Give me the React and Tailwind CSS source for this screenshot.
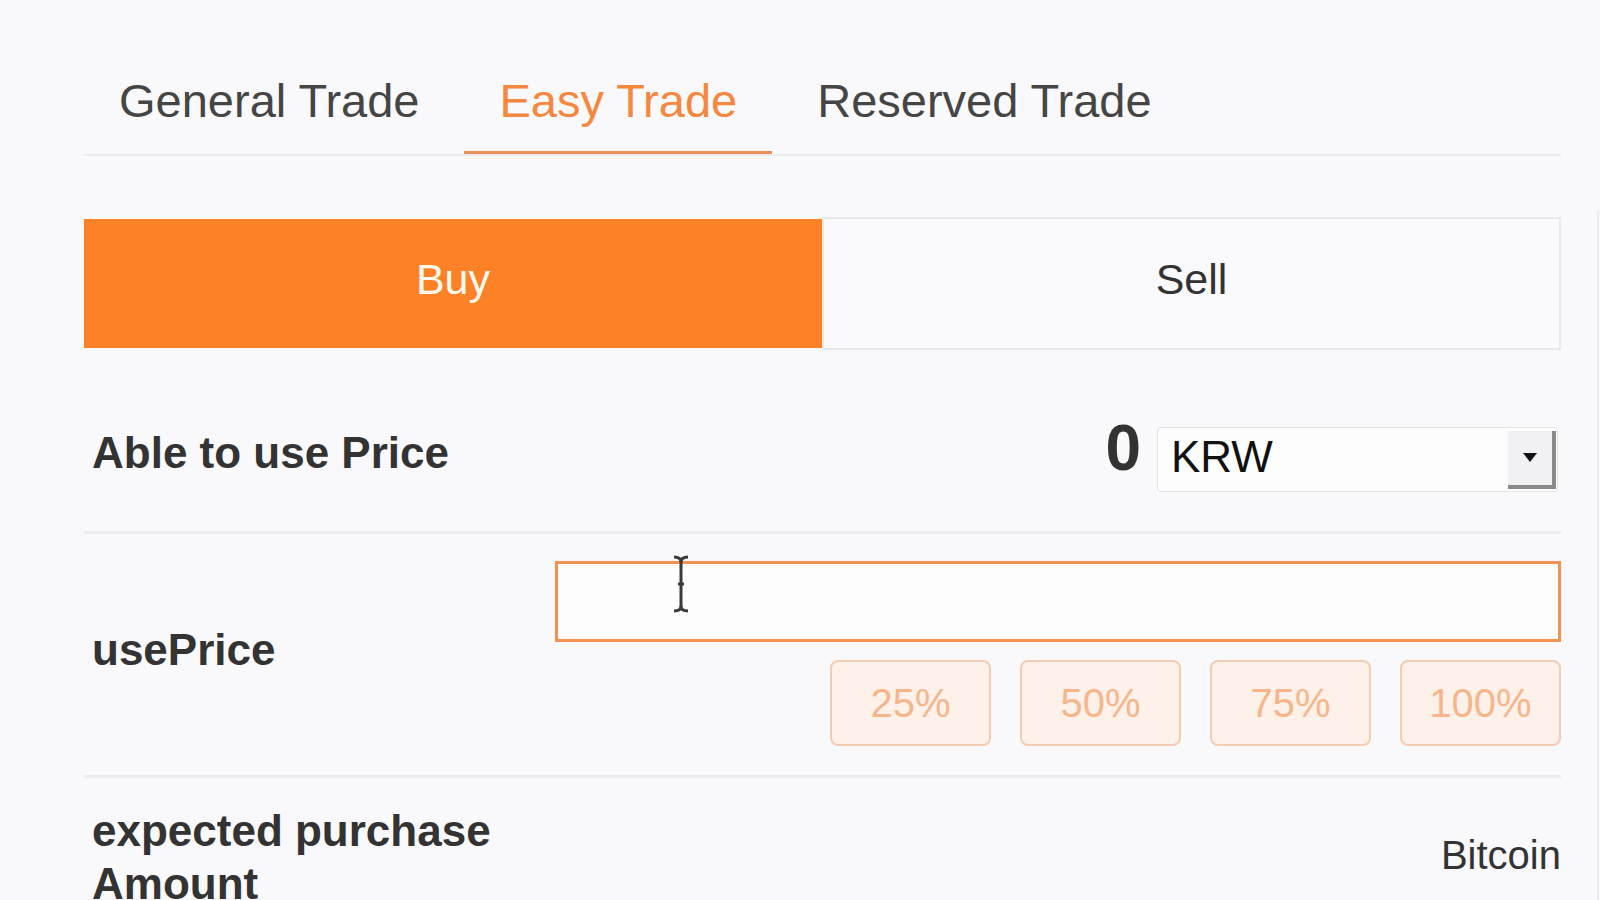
import { useState } from 'react';

const font = { fontFamily: '"Liberation Sans", Arial, sans-serif' };

function TextCursor() {
    // I-beam mouse cursor hovering over the price input
    return (
        <svg width="18" height="58" viewBox="0 0 18 58" className="absolute left-[117px] top-[-6px]">
            <path d="M2 2 Q9 2 9 7 Q9 2 16 2" fill="none" stroke="#3a3a3a" strokeWidth="3" />
            <line x1="9" y1="6" x2="9" y2="52" stroke="#3a3a3a" strokeWidth="3" />
            <line x1="6" y1="29" x2="12" y2="29" stroke="#3a3a3a" strokeWidth="3" />
            <path d="M2 56 Q9 56 9 51 Q9 56 16 56" fill="none" stroke="#3a3a3a" strokeWidth="3" />
        </svg>
    );
}

function App() {
    const [tab, setTab] = useState('easy');
    const [side, setSide] = useState('buy');
    const [price, setPrice] = useState('');

    const tabs = [
        { id: 'general', label: 'General Trade' },
        { id: 'easy', label: 'Easy Trade' },
        { id: 'reserved', label: 'Reserved Trade' },
    ];

    return (
        <div className="h-[900px] w-[1600px] overflow-hidden bg-[#f9f9fb] flex" style={font}>
            <div className="flex-1 pl-[84px] pr-[36px]">
                {/* tabs */}
                <div className="mt-[56px] flex gap-[10px] border-b-2 border-[#ececf0]">
                    {tabs.map((t) => (
                        <button
                            key={t.id}
                            onClick={() => setTab(t.id)}
                            className={
                                tab === t.id
                                    ? 'h-[98px] px-[35px] pb-[6px] border-b-[3px] border-[#e9905a] text-[47px] text-[#f5873f] leading-none'
                                    : 'h-[98px] px-[35px] pb-[6px] border-b-[3px] border-transparent text-[47px] text-[#454545] leading-none'
                            }
                        >
                            {t.label}
                        </button>
                    ))}
                </div>

                {/* buy / sell */}
                <div className="mt-[63px] flex h-[129px]">
                    <button
                        onClick={() => setSide('buy')}
                        className={
                            side === 'buy'
                                ? 'w-[738px] pb-[8px] bg-[#fd8227] text-[#fffaf0] text-[43px]'
                                : 'w-[738px] pb-[8px] bg-[#fafafc] border-2 border-[#e9e9ec] text-[#333] text-[43px]'
                        }
                    >
                        Buy
                    </button>
                    <button
                        onClick={() => setSide('sell')}
                        className={
                            side === 'sell'
                                ? 'flex-1 pb-[8px] bg-[#fd8227] text-[#fffaf0] text-[43px]'
                                : 'flex-1 -mt-[2px] h-[133px] pb-[8px] bg-[#fafafc] border-2 border-[#e9e9ec] text-[#333] text-[43px]'
                        }
                    >
                        Sell
                    </button>
                </div>

                {/* able to use price */}
                <div className="flex items-center pt-[79px] pb-[39px] pl-[8px] pr-[3px] border-b-[3px] border-[#ededf1]">
                    <div className="flex-1 mb-[14px] text-[44px] font-bold text-[#333] leading-none">Able to use Price</div>
                    <div className="-mt-[24px] text-[64px] font-bold text-[#333] leading-none">0</div>
                    <div className="ml-[16px] w-[401px] h-[65px] flex items-center border border-[#e3e3e6] rounded-[4px] bg-[#fdfdfd]">
                        <span className="flex-1 pl-[13px] pb-[6px] text-[44px] text-[#111] leading-none">KRW</span>
                        <div className="w-[48px] h-[58px] mr-[1px] flex items-center justify-center bg-[#f1f1f3] border-r-[4px] border-b-[4px] border-[#8a8a8a]">
                            <svg width="14" height="9" viewBox="0 0 14 9">
                                <path d="M0 0 L14 0 L7 9 Z" fill="#111" />
                            </svg>
                        </div>
                    </div>
                </div>

                {/* use price */}
                <div className="flex pt-[27px] pb-[29px] pl-[8px] border-b-[3px] border-[#ededf1]">
                    <div className="flex-1 self-center mb-[7px] text-[44px] font-bold text-[#333] leading-none">usePrice</div>
                    <div className="w-[1006px]">
                        <div className="relative">
                            <input
                                type="text"
                                value={price}
                                onChange={(e) => setPrice(e.target.value)}
                                className="w-full h-[81px] bg-[#fdfdfe] border-[3px] border-[#f39150] outline-none px-[16px] text-[40px]"
                            />
                            <TextCursor />
                        </div>
                        <div className="mt-[18px] flex justify-end gap-[29px]">
                            {['25%', '50%', '75%', '100%'].map((p) => (
                                <button
                                    key={p}
                                    className="w-[161px] h-[86px] rounded-[8px] border-2 border-[#f3cdb3] bg-[#fdf1ea] text-[40px] text-[#f6b68c]"
                                >
                                    {p}
                                </button>
                            ))}
                        </div>
                    </div>
                </div>

                {/* expected amount */}
                <div className="flex pt-[26px] pl-[8px]">
                    <div className="w-[463px] text-[44px] font-bold text-[#333] leading-[53px]">expected purchase Amount</div>
                    <div className="flex-1 mt-[31px] text-right text-[40px] text-[#333] leading-none">Bitcoin</div>
                </div>
            </div>
            <div className="w-[3px] mt-[210px] border-l-2 border-[#ececef]"></div>
        </div>
    );
}

export default App;
